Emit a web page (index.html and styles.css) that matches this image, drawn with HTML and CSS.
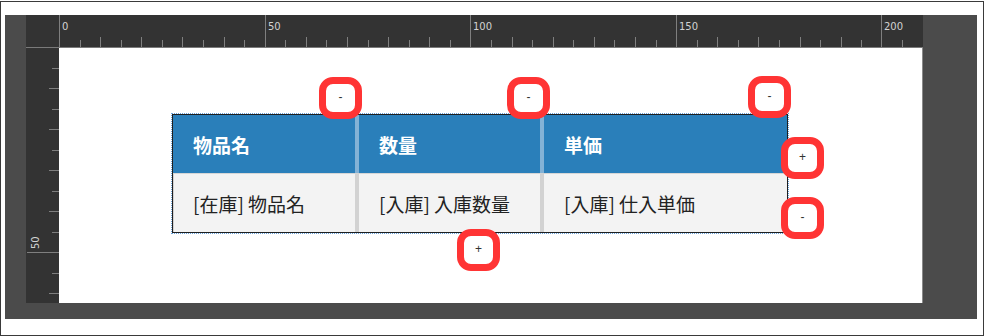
FILE: index.html
```html
<!DOCTYPE html>
<html lang="ja">
<head>
<meta charset="utf-8">
<title>Table editor</title>
<link rel="stylesheet" href="styles.css">
</head>
<body>
<div class="frame">
  <div class="workspace">
    <div class="editor">
      <div class="ruler-top-row">
        <div class="corner"></div>
        <svg class="ruler-top" width="864" height="32" viewBox="0 0 864 32">
          <g class="tick">
            <line x1="0.5" y1="0" x2="0.5" y2="32"/>
            <line x1="21.5" y1="25" x2="21.5" y2="32"/>
            <line x1="41.5" y1="22" x2="41.5" y2="32"/>
            <line x1="62.5" y1="25" x2="62.5" y2="32"/>
            <line x1="82.5" y1="22" x2="82.5" y2="32"/>
            <line x1="103.5" y1="25" x2="103.5" y2="32"/>
            <line x1="123.5" y1="22" x2="123.5" y2="32"/>
            <line x1="144.5" y1="25" x2="144.5" y2="32"/>
            <line x1="165.5" y1="22" x2="165.5" y2="32"/>
            <line x1="185.5" y1="25" x2="185.5" y2="32"/>
            <line x1="206.5" y1="0" x2="206.5" y2="32"/>
            <line x1="226.5" y1="25" x2="226.5" y2="32"/>
            <line x1="247.5" y1="22" x2="247.5" y2="32"/>
            <line x1="267.5" y1="25" x2="267.5" y2="32"/>
            <line x1="288.5" y1="22" x2="288.5" y2="32"/>
            <line x1="309.5" y1="25" x2="309.5" y2="32"/>
            <line x1="329.5" y1="22" x2="329.5" y2="32"/>
            <line x1="350.5" y1="25" x2="350.5" y2="32"/>
            <line x1="370.5" y1="22" x2="370.5" y2="32"/>
            <line x1="391.5" y1="25" x2="391.5" y2="32"/>
            <line x1="411.5" y1="0" x2="411.5" y2="32"/>
            <line x1="432.5" y1="25" x2="432.5" y2="32"/>
            <line x1="453.5" y1="22" x2="453.5" y2="32"/>
            <line x1="473.5" y1="25" x2="473.5" y2="32"/>
            <line x1="494.5" y1="22" x2="494.5" y2="32"/>
            <line x1="514.5" y1="25" x2="514.5" y2="32"/>
            <line x1="535.5" y1="22" x2="535.5" y2="32"/>
            <line x1="555.5" y1="25" x2="555.5" y2="32"/>
            <line x1="576.5" y1="22" x2="576.5" y2="32"/>
            <line x1="597.5" y1="25" x2="597.5" y2="32"/>
            <line x1="617.5" y1="0" x2="617.5" y2="32"/>
            <line x1="638.5" y1="25" x2="638.5" y2="32"/>
            <line x1="658.5" y1="22" x2="658.5" y2="32"/>
            <line x1="679.5" y1="25" x2="679.5" y2="32"/>
            <line x1="699.5" y1="22" x2="699.5" y2="32"/>
            <line x1="720.5" y1="25" x2="720.5" y2="32"/>
            <line x1="741.5" y1="22" x2="741.5" y2="32"/>
            <line x1="761.5" y1="25" x2="761.5" y2="32"/>
            <line x1="782.5" y1="22" x2="782.5" y2="32"/>
            <line x1="802.5" y1="25" x2="802.5" y2="32"/>
            <line x1="822.5" y1="0" x2="822.5" y2="32"/>
            <line x1="843.5" y1="25" x2="843.5" y2="32"/>
          </g>
          <g class="label">
            <text x="3" y="15">0</text>
            <text x="209" y="15">50</text>
            <text x="414" y="15">100</text>
            <text x="620" y="15">150</text>
            <text x="825" y="15">200</text>
          </g>
        </svg>
      </div>
      <div class="body-row">
        <svg class="ruler-left" width="33" height="255" viewBox="0 0 33 255">
          <g class="tick">
            <line x1="26" y1="20.5" x2="33" y2="20.5"/>
            <line x1="23" y1="40.5" x2="33" y2="40.5"/>
            <line x1="26" y1="61.5" x2="33" y2="61.5"/>
            <line x1="23" y1="81.5" x2="33" y2="81.5"/>
            <line x1="26" y1="102.5" x2="33" y2="102.5"/>
            <line x1="23" y1="122.5" x2="33" y2="122.5"/>
            <line x1="26" y1="143.5" x2="33" y2="143.5"/>
            <line x1="23" y1="163.5" x2="33" y2="163.5"/>
            <line x1="26" y1="184.5" x2="33" y2="184.5"/>
            <line x1="1" y1="204.5" x2="33" y2="204.5"/>
            <line x1="26" y1="225.5" x2="33" y2="225.5"/>
            <line x1="23" y1="245.5" x2="33" y2="245.5"/>
          </g>
          <g class="label">
            <text transform="translate(13 201) rotate(-90)">50</text>
          </g>
        </svg>
        <div class="canvas">
          <div class="table-wrap">
            <div class="grid">
              <div class="th">物品名</div>
              <div class="th">数量</div>
              <div class="th last">単価</div>
              <div class="td first">[在庫] 物品名</div>
              <div class="td">[入庫] 入庫数量</div>
              <div class="td last">[入庫] 仕入単価</div>
            </div>
            <button class="ctl b-col1">-</button>
            <button class="ctl b-col2">-</button>
            <button class="ctl b-col3">-</button>
            <button class="ctl b-row-add">+</button>
            <button class="ctl b-row-del">-</button>
            <button class="ctl b-add-bottom">+</button>
          </div>
        </div>
      </div>
    </div>
  </div>
</div>
</body>
</html>
```

FILE: styles.css
```css
html, body {
  margin: 0;
  padding: 0;
  background: #ffffff;
}

.frame {
  box-sizing: border-box;
  width: 984px;
  height: 335px;
  margin-top: 1px;
  border: 1px solid #3a3a3a;
  padding: 13px 0 0 4px;
}

.workspace {
  width: 972px;
  height: 304px;
  background: #4b4b4b;
  padding-left: 21px;
  box-sizing: border-box;
}

.editor {
  display: flex;
  flex-direction: column;
  width: 897px;
}

.ruler-top-row {
  display: flex;
  height: 33px;
  box-sizing: border-box;
  border-bottom: 1px solid #7a7a7a;
  background: #333333;
}

.corner {
  width: 33px;
  height: 32px;
  background: #333333;
}

.ruler-top,
.ruler-left {
  display: block;
  background: #333333;
}

.tick line {
  stroke: #7f7f7f;
  stroke-width: 1;
  shape-rendering: crispEdges;
}

.label text {
  fill: #d2d2d2;
  font-family: "DejaVu Sans", sans-serif;
  font-size: 10px;
}

.body-row {
  display: flex;
  height: 255px;
}

.canvas {
  box-sizing: border-box;
  width: 864px;
  height: 255px;
  background: #ffffff;
  border-right: 1px solid #8a8a8a;
  padding: 66px 0 0 113px;
}

.table-wrap {
  position: relative;
  width: 616px;
}

.grid {
  display: grid;
  grid-template-columns: 186px 185px 243px;
  grid-template-rows: 58px 59px;
  border: 1px solid #1f1f1f;
  outline: 1px dotted #6aa3da;
  font-family: "Noto Sans CJK JP", sans-serif;
  font-size: 19px;
}

.th,
.td {
  box-sizing: border-box;
  display: flex;
  align-items: center;
  padding-left: 20px;
  white-space: nowrap;
}

.th {
  background: #2a7fba;
  color: #ffffff;
  font-weight: 700;
  border-right: 4px solid #83b2d6;
}

.td {
  background: #f3f3f3;
  color: #222222;
  border-top: 1px solid #d6d6d6;
  border-right: 4px solid #d2d2d2;
}

.td.first {
  box-shadow: inset 1px 0 0 #d2d2d2;
}

.th.last,
.td.last {
  border-right: none;
}

.ctl {
  position: absolute;
  box-sizing: border-box;
  width: 43px;
  height: 42px;
  margin: 0;
  padding: 0 0 2px 0;
  border: 7px solid #ff3434;
  border-radius: 14px;
  background: #ffffff;
  color: #333333;
  font-family: "Liberation Sans", sans-serif;
  font-size: 12px;
  line-height: 1;
  display: flex;
  align-items: center;
  justify-content: center;
}

.b-col1 { left: 147px; top: -37px; }
.b-col2 { left: 335px; top: -37px; }
.b-col3 { left: 576px; top: -38px; }
.b-row-add { left: 609px; top: 23px; }
.b-row-del { left: 609px; top: 83px; }
.b-add-bottom { left: 285px; top: 115px; }
```
